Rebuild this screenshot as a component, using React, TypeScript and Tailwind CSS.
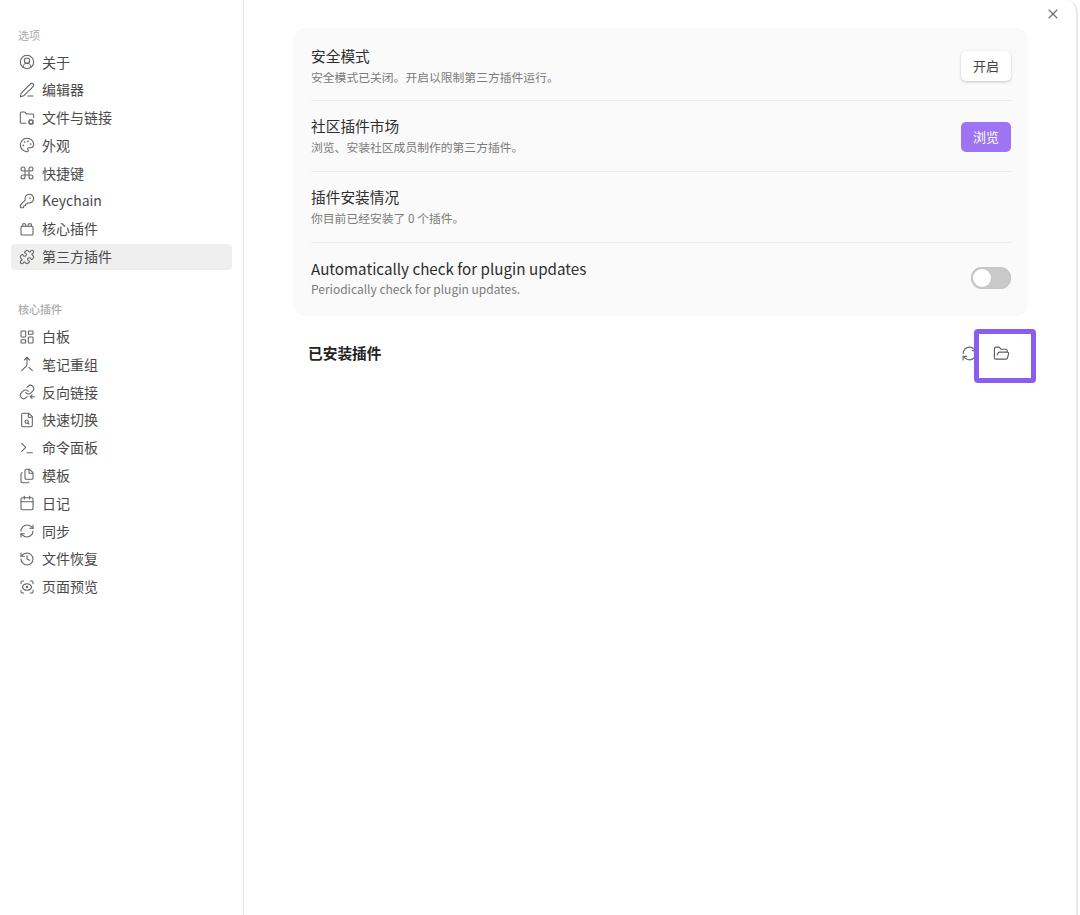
import type { ReactNode } from 'react';
import {
  CircleUserRound, PenLine, FolderCog, Palette, Command, KeyRound, Puzzle, LayoutDashboard,
  Merge, FileSearch, Terminal, Files, Calendar, RefreshCw, History, ScanEye, FolderOpen, X,
} from 'lucide-react';

const cjk = 'font-["Noto_Sans_CJK_SC","Lato",sans-serif]';
const sw = 1.6;

function CoreIcon() {
  return (
    <svg width="16" height="16" viewBox="0 0 24 24" fill="none" stroke="currentColor" strokeWidth={sw} strokeLinecap="round" strokeLinejoin="round">
      <rect x="3" y="8" width="18" height="13" rx="1.5" />
      <path d="M5.5 8V5a1 1 0 0 1 1-1h2.5a1 1 0 0 1 1 1v3" />
      <path d="M14 8V5a1 1 0 0 1 1-1h2.500a1 1 0 0 1 1 1v3" />
    </svg>
  );
}

function BacklinkIcon() {
  return (
    <svg width="16" height="16" viewBox="0 0 24 24" fill="none" stroke="currentColor" strokeWidth={sw} strokeLinecap="round" strokeLinejoin="round">
      <path d="M10 13a5 5 0 0 0 7.54.54l3-3a5 5 0 0 0-7.07-7.07l-1.72 1.71" />
      <path d="M14 11a5 5 0 0 0-7.54-.54l-3 3a5 5 0 0 0 7.07 7.07l1.71-1.71" />
      <path d="M23 19h-6" />
      <path d="m19.500 16.500-2.500 2.500 2.500 2.500" />
    </svg>
  );
}

const optionItems: [ReactNode, string][] = [
  [<CircleUserRound size={16} strokeWidth={sw} />, '关于'],
  [<PenLine size={16} strokeWidth={sw} />, '编辑器'],
  [<FolderCog size={16} strokeWidth={sw} />, '文件与链接'],
  [<Palette size={16} strokeWidth={sw} />, '外观'],
  [<Command size={16} strokeWidth={sw} />, '快捷键'],
  [<KeyRound size={16} strokeWidth={sw} />, 'Keychain'],
  [<CoreIcon />, '核心插件'],
  [<Puzzle size={16} strokeWidth={sw} />, '第三方插件'],
];

const coreItems: [ReactNode, string][] = [
  [<LayoutDashboard size={16} strokeWidth={sw} />, '白板'],
  [<Merge size={16} strokeWidth={sw} />, '笔记重组'],
  [<BacklinkIcon />, '反向链接'],
  [<FileSearch size={16} strokeWidth={sw} />, '快速切换'],
  [<Terminal size={16} strokeWidth={sw} />, '命令面板'],
  [<Files size={16} strokeWidth={sw} />, '模板'],
  [<Calendar size={16} strokeWidth={sw} />, '日记'],
  [<RefreshCw size={16} strokeWidth={sw} />, '同步'],
  [<History size={16} strokeWidth={sw} />, '文件恢复'],
  [<ScanEye size={16} strokeWidth={sw} />, '页面预览'],
];

function NavItem({ icon, label, active }: { icon: ReactNode; label: string; active?: boolean }) {
  return (
    <div className={`h-[26px] mb-[1.8px] flex items-center gap-[7px] pl-2 rounded text-[14px] text-[#4a4a4a] ${active ? 'bg-[#efefef]' : ''}`}>
      <span className="w-4 flex justify-center text-[#636363]">{icon}</span>
      <span>{label}</span>
    </div>
  );
}

interface RowProps {
  title: string;
  desc: string;
  className: string;
  titleSize?: string;
  descSize?: string;
  children?: ReactNode;
}

function Row({ title, desc, className, titleSize = 'text-[14.7px]', descSize = 'text-[11.8px]', children }: RowProps) {
  return (
    <div className={`flex items-center justify-between border-b border-[#ececec] last:border-b-0 ${className}`}>
      <div>
        <div className={`leading-5 text-[#2e2e2e] ${titleSize}`}>{title}</div>
        <div className={`leading-4 mt-[3px] text-[#7b7b7b] ${descSize}`}>{desc}</div>
      </div>
      {children}
    </div>
  );
}

export default function App() {
  return (
    <div className={`relative h-[915px] w-[1080px] flex bg-white overflow-hidden ${cjk}`}>
      <aside className="w-[244px] shrink-0 border-r border-[#e6e6e6] pt-[27px] px-[11px]">
        <div className="pl-[7px] h-4 leading-4 mb-[6px] text-[11px] text-[#ababab]">选项</div>
        {optionItems.map(([icon, label]) => (
          <NavItem key={label} icon={icon} label={label} active={label === '第三方插件'} />
        ))}
        <div className="pl-[7px] h-4 leading-4 mt-[31px] mb-[7px] text-[11px] font-medium text-[#ababab]">核心插件</div>
        {coreItems.map(([icon, label]) => (
          <NavItem key={label} icon={icon} label={label} />
        ))}
      </aside>

      <main className="flex-1 pt-[28px] pl-[49px] pr-[52px]">
        <section className="bg-[#fafafa] rounded-xl pl-[18px] pr-[17px] h-[288px]">
          <Row className="h-[73px] pt-[3px]" title="安全模式" desc="安全模式已关闭。开启以限制第三方插件运行。">
            <button className="w-[50px] h-[30px] rounded-[5px] bg-white text-[13px] text-[#444] shadow-[0_1px_3px_rgba(0,0,0,0.22)]">开启</button>
          </Row>
          <Row className="h-[71px] pb-[1px]" title="社区插件市场" desc="浏览、安装社区成员制作的第三方插件。">
            <button className="w-[50px] h-[30px] mt-[2px] rounded-[5px] bg-[#9d74f2] text-[13px] text-white">浏览</button>
          </Row>
          <Row className="h-[71px] pb-[1px]" title="插件安装情况" desc="你目前已经安装了 0 个插件。" />
          <Row className="h-[73px] pb-[4px]" titleSize="text-[15.2px]" descSize="text-[12px]" title="Automatically check for plugin updates" desc="Periodically check for plugin updates.">
            <div className="w-10 h-[22px] p-[2px] rounded-full bg-[#c9c9c9] shadow-[inset_0_0_0_1px_#c4c4c4]">
              <div className="w-[18px] h-[18px] rounded-full bg-white" />
            </div>
          </Row>
        </section>

        <div className="mt-[10px] h-[54px] flex items-center pl-[15px]">
          <h2 className="flex-1 text-[14.7px] font-bold text-[#222]">已安装插件</h2>
          <RefreshCw size={17} strokeWidth={sw} className="text-[#6b6b6b]" />
          <div className="w-[50px] flex justify-center mr-[2px] ml-[-2px]">
            <FolderOpen size={17} strokeWidth={sw} className="text-[#5c5c5c]" />
          </div>
        </div>
      </main>

      <div className="absolute left-[974px] top-[329px] w-[62px] h-[54px] border-[5.5px] border-[#8b5cf0] rounded-[4px]" />
      <X size={16} strokeWidth={1.6} className="absolute left-[1045px] top-[6px] text-[#6a6a6a]" />
      <div className="absolute right-[2px] top-0 bottom-0 w-10 border-r-2 border-[#e9e9e9] rounded-tr-xl" />
    </div>
  );
}
